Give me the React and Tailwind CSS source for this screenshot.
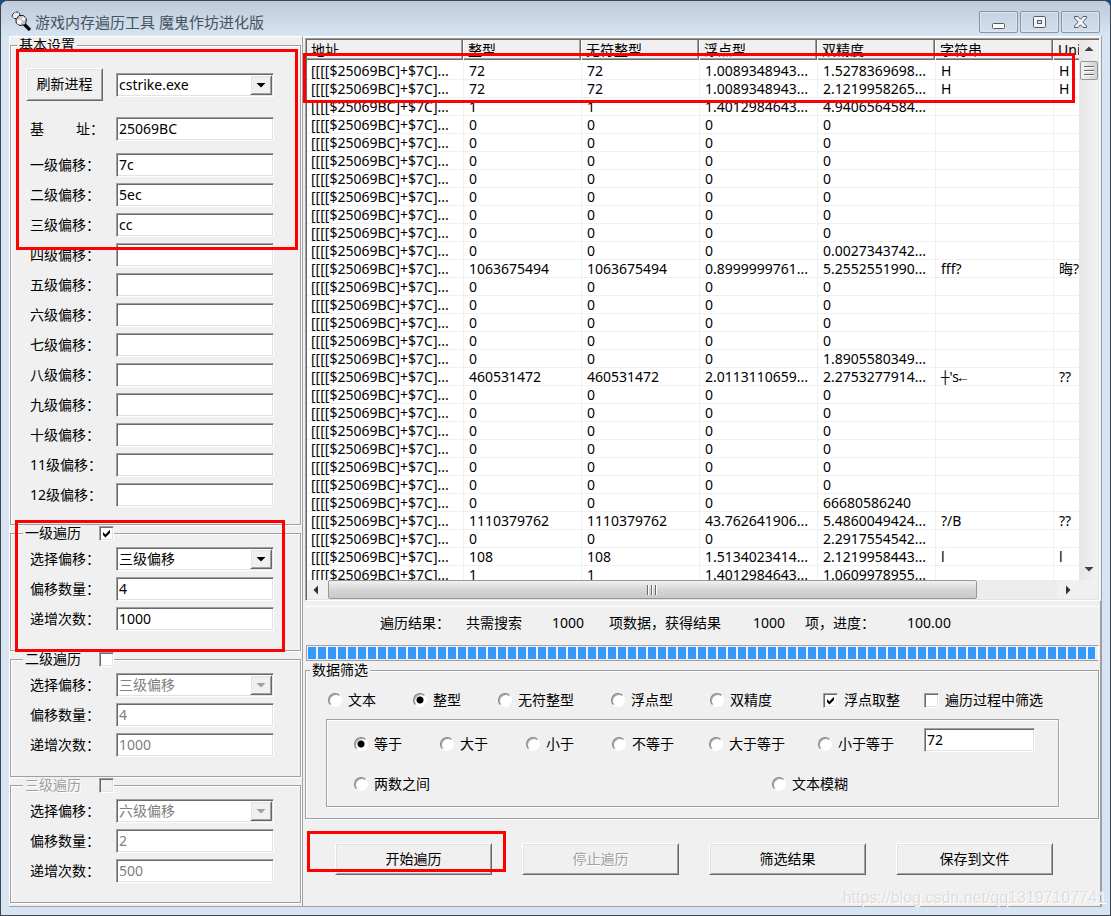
import React, { useId } from 'react';

const sunken =
    'border border-t-[#a0a0a0] border-l-[#a0a0a0] border-b-white border-r-white shadow-[inset_1px_1px_0_#696969,inset_-1px_-1px_0_#e3e3e3]';
const raised =
    'border border-t-white border-l-white border-b-[#696969] border-r-[#696969] shadow-[inset_1px_1px_0_#e3e3e3,inset_-1px_-1px_0_#a0a0a0]';
const etched = 'border border-[#a0a0a0] shadow-[inset_1px_1px_0_#fff,1px_1px_0_#fff]';

const offsets = [
    ['一级偏移：', '7c'],
    ['二级偏移：', '5ec'],
    ['三级偏移：', 'cc'],
    ['四级偏移：', ''],
    ['五级偏移：', ''],
    ['六级偏移：', ''],
    ['七级偏移：', ''],
    ['八级偏移：', ''],
    ['九级偏移：', ''],
    ['十级偏移：', ''],
    ['11级偏移：', ''],
    ['12级偏移：', ''],
];

const columns = ['地址', '整型', '无符整型', '浮点型', '双精度', '字符串', 'Uni'];

const address = '[[[[$25069BC]+$7C]...';
const zero = ['0', '0', '0', '0', '', ''];
const rows = [
    ['72', '72', '1.0089348943...', '1.5278369698...', 'H', 'H'],
    ['72', '72', '1.0089348943...', '2.1219958265...', 'H', 'H'],
    ['1', '1', '1.4012984643...', '4.9406564584...', '', ''],
    zero,
    zero,
    zero,
    zero,
    zero,
    zero,
    zero,
    ['0', '0', '0', '0.0027343742...', '', ''],
    ['1063675494', '1063675494', '0.8999999761...', '5.2552551990...', 'fff?', '晦?'],
    zero,
    zero,
    zero,
    zero,
    ['0', '0', '0', '1.8905580349...', '', ''],
    ['460531472', '460531472', '2.0113110659...', '2.2753277914...', "┼'s←", '??'],
    zero,
    zero,
    zero,
    zero,
    zero,
    zero,
    ['0', '0', '0', '66680586240', '', ''],
    ['1110379762', '1110379762', '43.762641906...', '5.4860049424...', '?/B', '??'],
    ['0', '0', '0', '2.2917554542...', '', ''],
    ['108', '108', '1.5134023414...', '2.1219958443...', 'l', 'l'],
    ['1', '1', '1.4012984643...', '1.0609978955...', '', ''],
];

const Arrow = ({ className, points }) => (
    <svg className={className} viewBox="0 0 10 10" fill="currentColor" aria-hidden="true">
        <polygon points={points} />
    </svg>
);

const TextField = ({ label, value, disabled }) => {
    const id = useId();
    return (
        <div className="flex items-center">
            <label htmlFor={id} className="w-[86px] shrink-0">
                {label}
            </label>
            <input
                id={id}
                type="text"
                defaultValue={value}
                disabled={disabled}
                className={`h-6 w-[158px] bg-white pb-0.5 pl-0.5 disabled:text-[#808080] ${sunken}`}
            />
        </div>
    );
};

const Combo = ({ id, label, value, disabled }) => (
    <div className="relative w-[158px]">
        <select
            id={id}
            aria-label={label}
            defaultValue={value}
            disabled={disabled}
            className={`block h-6 w-full appearance-none bg-white pl-0.5 opacity-100 disabled:text-[#808080] ${sunken}`}
        >
            <option>{value}</option>
        </select>
        <span
            className={`pointer-events-none absolute top-0.5 right-0.5 bottom-0.5 flex w-[22px] items-center justify-center bg-[#f0f0f0] ${raised} ${
                disabled ? 'text-[#a0a0a0]' : 'text-black'
            }`}
        >
            <Arrow className="h-2.5 w-2.5" points="0.5,3 9.5,3 5,7.5" />
        </span>
    </div>
);

const CheckBox = ({ children, checked, disabled, reverse }) => (
    <label
        className={`flex items-center ${reverse ? 'flex-row-reverse gap-[18px]' : 'gap-1.5'} ${
            disabled ? 'text-[#a0a0a0] [text-shadow:1px_1px_0_#fff]' : ''
        }`}
    >
        <span className="relative flex">
            <input
                type="checkbox"
                defaultChecked={checked}
                disabled={disabled}
                className={`peer h-[15px] w-[15px] appearance-none bg-white disabled:bg-[#f0f0f0] ${sunken}`}
            />
            <svg
                className="pointer-events-none absolute inset-0 hidden h-[15px] w-[15px] peer-checked:block"
                viewBox="0 0 15 15"
                aria-hidden="true"
            >
                <path d="M4 6 L6.4 8.4 L11 3.8 V7 L6.4 11.4 L4 9 Z" fill="#000" />
            </svg>
        </span>
        <span>{children}</span>
    </label>
);

const Radio = ({ name, children, checked }) => (
    <label className="flex h-4 items-center gap-1.5 whitespace-nowrap">
        <input
            type="radio"
            name={name}
            defaultChecked={checked}
            className="h-3.5 w-3.5 appearance-none rounded-full border border-t-[#808080] border-r-white border-b-white border-l-[#808080] bg-white shadow-[inset_1px_1px_0_#a0a0a0] checked:bg-[radial-gradient(circle,#000_3px,#fff_4px)]"
        />
        <span>{children}</span>
    </label>
);

const Group = ({ legend, className, children }) => (
    <fieldset className={`${etched} ${className}`}>
        {legend}
        {children}
    </fieldset>
);

/* Grupo de configuração de cada nível de percurso */
const TraverseGroup = ({ title, checked, locked, disabled, offset, count, times }) => {
    const id = useId();
    return (
        <Group
            className="mr-px"
            legend={
                <legend className="ml-3 h-4 bg-[#f0f0f0] pl-0.5">
                    <CheckBox reverse checked={checked} disabled={locked}>
                        {title}
                    </CheckBox>
                </legend>
            }
        >
            <div className="flex flex-col gap-1.5 pt-1.5 pb-[19px] pl-[19px]">
                <div className="flex items-center">
                    <label htmlFor={id} className="w-[86px] shrink-0">
                        选择偏移：
                    </label>
                    <Combo id={id} value={offset} disabled={disabled} />
                </div>
                <TextField label="偏移数量：" value={count} disabled={disabled} />
                <TextField label="递增次数：" value={times} disabled={disabled} />
            </div>
        </Group>
    );
};

const PushButton = ({ children, disabled, className }) => (
    <button
        type="button"
        disabled={disabled}
        className={`bg-[#f0f0f0] disabled:text-[#a0a0a0] disabled:[text-shadow:1px_1px_0_#fff] ${raised} ${className}`}
    >
        {children}
    </button>
);

const Marker = ({ className }) => (
    <div className={`pointer-events-none absolute z-10 border-3 border-[#ff0000] ${className}`} />
);

const captionButton =
    'flex h-[22px] w-[39px] items-center justify-center rounded-xs border border-[#8593ab] bg-gradient-to-b from-[#c5d3e2] to-[#d3dfec] shadow-[inset_0_0_0_1px_#dbe6f1]';

const TitleBar = () => (
    <header className="flex h-[35px] items-start rounded-t-md bg-gradient-to-b from-[#bccad9] to-[#d7e4f2] pr-[10px] pl-2.5">
        <svg className="mt-2.5 h-5 w-5" viewBox="0 0 20 20" aria-hidden="true">
            <path d="M13 13 L19 19" stroke="#000" strokeWidth="3.2" />
            <path d="M1.5 3.5 L4 1.2 L7.5 1 L9 3.5 L7 7.5 L3.5 7.5 L1 5.5 Z" fill="#ececec" stroke="#222" strokeDasharray="3 1" />
            <path d="M5 8.5 L8 4.5 L12.5 4.5 L15.5 8 L14.5 13.5 L9 14.6 L5.2 12 Z" fill="#c4c4c4" stroke="#222" />
            <circle cx="8.2" cy="11" r="2.4" fill="#fff" />
            <circle cx="12.6" cy="7.8" r="1.8" fill="#f4f4f4" />
        </svg>
        <h1 className="mt-[11px] ml-1 flex-1 text-[15px] leading-5 text-[#46525f]">游戏内存遍历工具 魔鬼作坊进化版</h1>
        <div className="mt-2.5 flex gap-0.5">
            <button type="button" aria-label="最小化" className={captionButton}>
                <svg width="15" height="15" viewBox="0 0 15 15">
                    <rect x="1.5" y="8.5" width="12" height="5" rx="1" fill="#fff" stroke="#525c6c" />
                </svg>
            </button>
            <button type="button" aria-label="最大化" className={captionButton}>
                <svg width="15" height="15" viewBox="0 0 15 15">
                    <rect x="1.5" y="1.5" width="12" height="11" rx="1" fill="#f4f4f4" stroke="#525c6c" />
                    <rect x="5.5" y="5.5" width="4" height="3" fill="#d3dfec" stroke="#525c6c" />
                </svg>
            </button>
            <button type="button" aria-label="关闭" className={captionButton}>
                <svg width="15" height="15" viewBox="0 0 15 15">
                    <path
                        d="M1.5 1.5 H5 L7.5 4.3 L10 1.5 H13.5 V3 L9.8 7 L13.5 11 V12.5 H10 L7.5 9.8 L5 12.5 H1.5 V11 L5.2 7 L1.5 3 Z"
                        fill="#f4f4f4"
                        stroke="#525c6c"
                    />
                </svg>
            </button>
        </div>
    </header>
);

const SettingsPanel = () => (
    <section className="relative w-[294px] shrink-0 border-t border-r border-l border-t-white border-r-[#a0a0a0] border-l-white">
        <Group
            className="mr-px"
            legend={<legend className="ml-1.5 h-4 bg-[#f0f0f0] px-0.5">基本设置</legend>}
        >
            <div className="pt-[15px] pb-[17px] pl-[19px]">
                <div className="-ml-1 flex items-center">
                    <PushButton className="mr-[13px] h-[33px] w-[77px] pb-0.5">刷新进程</PushButton>
                    <Combo label="进程" value="cstrike.exe" />
                </div>
                <div className="mt-4">
                    <TextField
                        label={
                            <span className="flex gap-8">
                                <span>基</span>
                                <span>址：</span>
                            </span>
                        }
                        value="25069BC"
                    />
                </div>
                <div className="mt-3 flex flex-col gap-1.5">
                    {offsets.map(([label, value]) => (
                        <TextField key={label} label={label} value={value} />
                    ))}
                </div>
            </div>
        </Group>
        <TraverseGroup title="一级遍历" checked offset="三级偏移" count="4" times="1000" />
        <TraverseGroup title="二级遍历" disabled offset="三级偏移" count="4" times="1000" />
        <TraverseGroup title="三级遍历" locked disabled offset="六级偏移" count="2" times="500" />
        <Marker className="top-3 right-1 left-1.5 h-[201px]" />
        <Marker className="top-[483px] right-[17px] left-[5px] h-[132px]" />
    </section>
);

const ResultTable = () => (
    <div className={`relative mt-px mr-px bg-white p-px ${sunken}`}>
        <div className="flex h-[540px]">
            <div className="min-w-0 flex-1 overflow-hidden">
                <table className="w-full table-fixed border-separate border-spacing-0 text-left font-['Noto_Sans','Liberation_Mono','Noto_Sans_CJK_SC',sans-serif]">
                    <colgroup>
                        <col className="w-[157px]" />
                        <col className="w-[118px]" />
                        <col className="w-[118px]" />
                        <col className="w-[118px]" />
                        <col className="w-[118px]" />
                        <col className="w-[118px]" />
                        <col />
                    </colgroup>
                    <thead>
                        <tr>
                            {columns.map((name) => (
                                <th
                                    key={name}
                                    className="h-[22px] overflow-hidden border-r border-b-2 border-white bg-[#f0f0f0] pl-1 font-normal whitespace-nowrap shadow-[inset_-1px_-1px_0_#696969,inset_-2px_-2px_0_#a0a0a0] last:border-r-0 last:shadow-[inset_0_-1px_0_#696969,inset_0_-2px_0_#a0a0a0]"
                                >
                                    {name}
                                </th>
                            ))}
                        </tr>
                    </thead>
                    <tbody>
                        {rows.map((row, index) => (
                            <tr key={index}>
                                {[address, ...row].map((cell, i) => (
                                    <td
                                        key={i}
                                        className="h-[18px] overflow-hidden border-r border-b border-[#f0f0f0] pl-[5px] leading-[17px] whitespace-nowrap first:pl-1 last:border-r-0"
                                    >
                                        {cell}
                                    </td>
                                ))}
                            </tr>
                        ))}
                    </tbody>
                </table>
            </div>
            {/* Barra de rolagem vertical */}
            <div className="flex w-[19px] shrink-0 flex-col items-center bg-gradient-to-r from-[#e6e6e6] to-[#f2f2f2] text-[#404040]">
                <Arrow className="mt-1 mb-[7px] h-2.5 w-2.5" points="0.5,7 9.5,7 5,2.5" />
                <div className="flex h-[19px] w-[18px] flex-col items-center justify-center gap-0.5 rounded-xs border border-[#979797] bg-gradient-to-r from-[#f4f4f4] to-[#d0d0d2]">
                    <span className="h-0.5 w-2.5 border-b border-white bg-[#6a6a6a]" />
                    <span className="h-0.5 w-2.5 border-b border-white bg-[#6a6a6a]" />
                    <span className="h-0.5 w-2.5 border-b border-white bg-[#6a6a6a]" />
                </div>
                <Arrow className="mt-auto mb-1.5 h-2.5 w-2.5" points="0.5,3 9.5,3 5,7.5" />
            </div>
        </div>
        {/* Barra de rolagem horizontal */}
        <div className="flex h-[19px] bg-[#f0f0f0] text-[#303030]">
            <div className="flex w-[21px] items-center pl-1">
                <Arrow className="h-2.5 w-2.5" points="7,0.5 7,9.5 2.5,5" />
            </div>
            <div className="flex-1 bg-[#ececec]">
                <div className="flex h-full w-[89%] items-center justify-center gap-0.5 rounded-xs border border-[#979797] bg-gradient-to-b from-[#f2f2f2] via-[#d6d6d8] to-[#c9c9cc]">
                    <span className="h-2.5 w-0.5 border-r border-white bg-[#6a6a6a]" />
                    <span className="h-2.5 w-0.5 border-r border-white bg-[#6a6a6a]" />
                    <span className="h-2.5 w-0.5 border-r border-white bg-[#6a6a6a]" />
                </div>
            </div>
            <div className="mr-[19px] flex w-[22px] items-center justify-center">
                <Arrow className="h-2.5 w-2.5" points="3,0.5 3,9.5 7.5,5" />
            </div>
        </div>
        <Marker className="top-3.5 right-6 -left-[3px] h-[50px]" />
    </div>
);

const StatusPanel = () => (
    <div className="mt-[5px] border-t border-white">
        <div className="flex pt-2 pb-3.5 pl-[75px] whitespace-nowrap">
            <span>遍历结果：</span>
            <span className="ml-4">共需搜索</span>
            <span className="ml-[30px]">1000</span>
            <span className="ml-[25px]">项数据，获得结果</span>
            <span className="ml-8">1000</span>
            <span className="ml-5">项，进度：</span>
            <span className="ml-8">100.00</span>
        </div>
        <div
            role="progressbar"
            aria-valuenow={100}
            aria-label="进度"
            className="mx-px border border-[#a0a0a0] border-r-white px-px py-px"
        >
            <div className="mr-0.5 h-3 bg-[repeating-linear-gradient(90deg,#3399ff_0_8px,transparent_8px_10px)]" />
        </div>
    </div>
);

const FilterPanel = () => (
    <Group
        className="mt-px mr-px"
        legend={<legend className="ml-1 h-4 bg-[#f0f0f0] px-0.5">数据筛选</legend>}
    >
        <div className="flex gap-[51px] pt-3.5 pl-[22px]">
            <div className="flex gap-[37px]">
                <Radio name="type">文本</Radio>
                <Radio name="type" checked>
                    整型
                </Radio>
                <Radio name="type">无符整型</Radio>
                <Radio name="type">浮点型</Radio>
                <Radio name="type">双精度</Radio>
            </div>
            <div className="flex gap-6">
                <CheckBox checked>浮点取整</CheckBox>
                <CheckBox>遍历过程中筛选</CheckBox>
            </div>
        </div>
        <div className={`mt-[11px] mr-[39px] mb-[11px] ml-5 pt-2 pb-3.5 pl-[27px] ${etched}`}>
            <div className="grid grid-cols-[86px_86px_86px_97px_109px_106px_111px] items-end">
                <Radio name="compare" checked>
                    等于
                </Radio>
                <Radio name="compare">大于</Radio>
                <Radio name="compare">小于</Radio>
                <Radio name="compare">不等于</Radio>
                <Radio name="compare">大于等于</Radio>
                <Radio name="compare">小于等于</Radio>
                <input
                    type="text"
                    aria-label="筛选值"
                    defaultValue="72"
                    className={`h-6 w-full bg-white pb-0.5 pl-0.5 ${sunken}`}
                />
            </div>
            <div className="mt-6 grid grid-cols-[418px_auto]">
                <Radio name="compare">两数之间</Radio>
                <Radio name="compare">文本模糊</Radio>
            </div>
        </div>
    </Group>
);

const App = () => (
    <div className="min-h-screen bg-[#1d4a80] font-['Noto_Sans','Noto_Sans_CJK_SC',sans-serif] text-[14px] leading-4 text-black">
        <div className="flex min-h-screen flex-col rounded-t-lg border border-[#3c434c] bg-[#d7e4f2]">
            <TitleBar />
            <main className="mx-2 mb-2 flex flex-1 border-r border-b border-[#a0a0a0] bg-[#f0f0f0]">
                <SettingsPanel />
                <div className="flex min-w-0 flex-1 flex-col border-t border-white pl-0.5">
                    <ResultTable />
                    <div className="relative flex-1 border-r border-[#a0a0a0]">
                        <StatusPanel />
                        <FilterPanel />
                        <div className="relative mt-6 flex gap-[30px] pl-[30px]">
                            <PushButton className="h-8 w-[157px]">开始遍历</PushButton>
                            <PushButton className="h-8 w-[157px]" disabled>
                                停止遍历
                            </PushButton>
                            <PushButton className="h-8 w-[157px]">筛选结果</PushButton>
                            <PushButton className="h-8 w-[157px]">保存到文件</PushButton>
                            <Marker className="-top-3 left-0.5 h-[41px] w-[199px]" />
                        </div>
                        <p className="absolute -right-1.5 bottom-0 font-['Liberation_Sans',sans-serif] text-base leading-4 text-[#dedede] [text-shadow:1px_1px_0_#fff]">
                            https://blog.csdn.net/qq13197107741
                        </p>
                    </div>
                </div>
            </main>
        </div>
    </div>
);

export default App;
